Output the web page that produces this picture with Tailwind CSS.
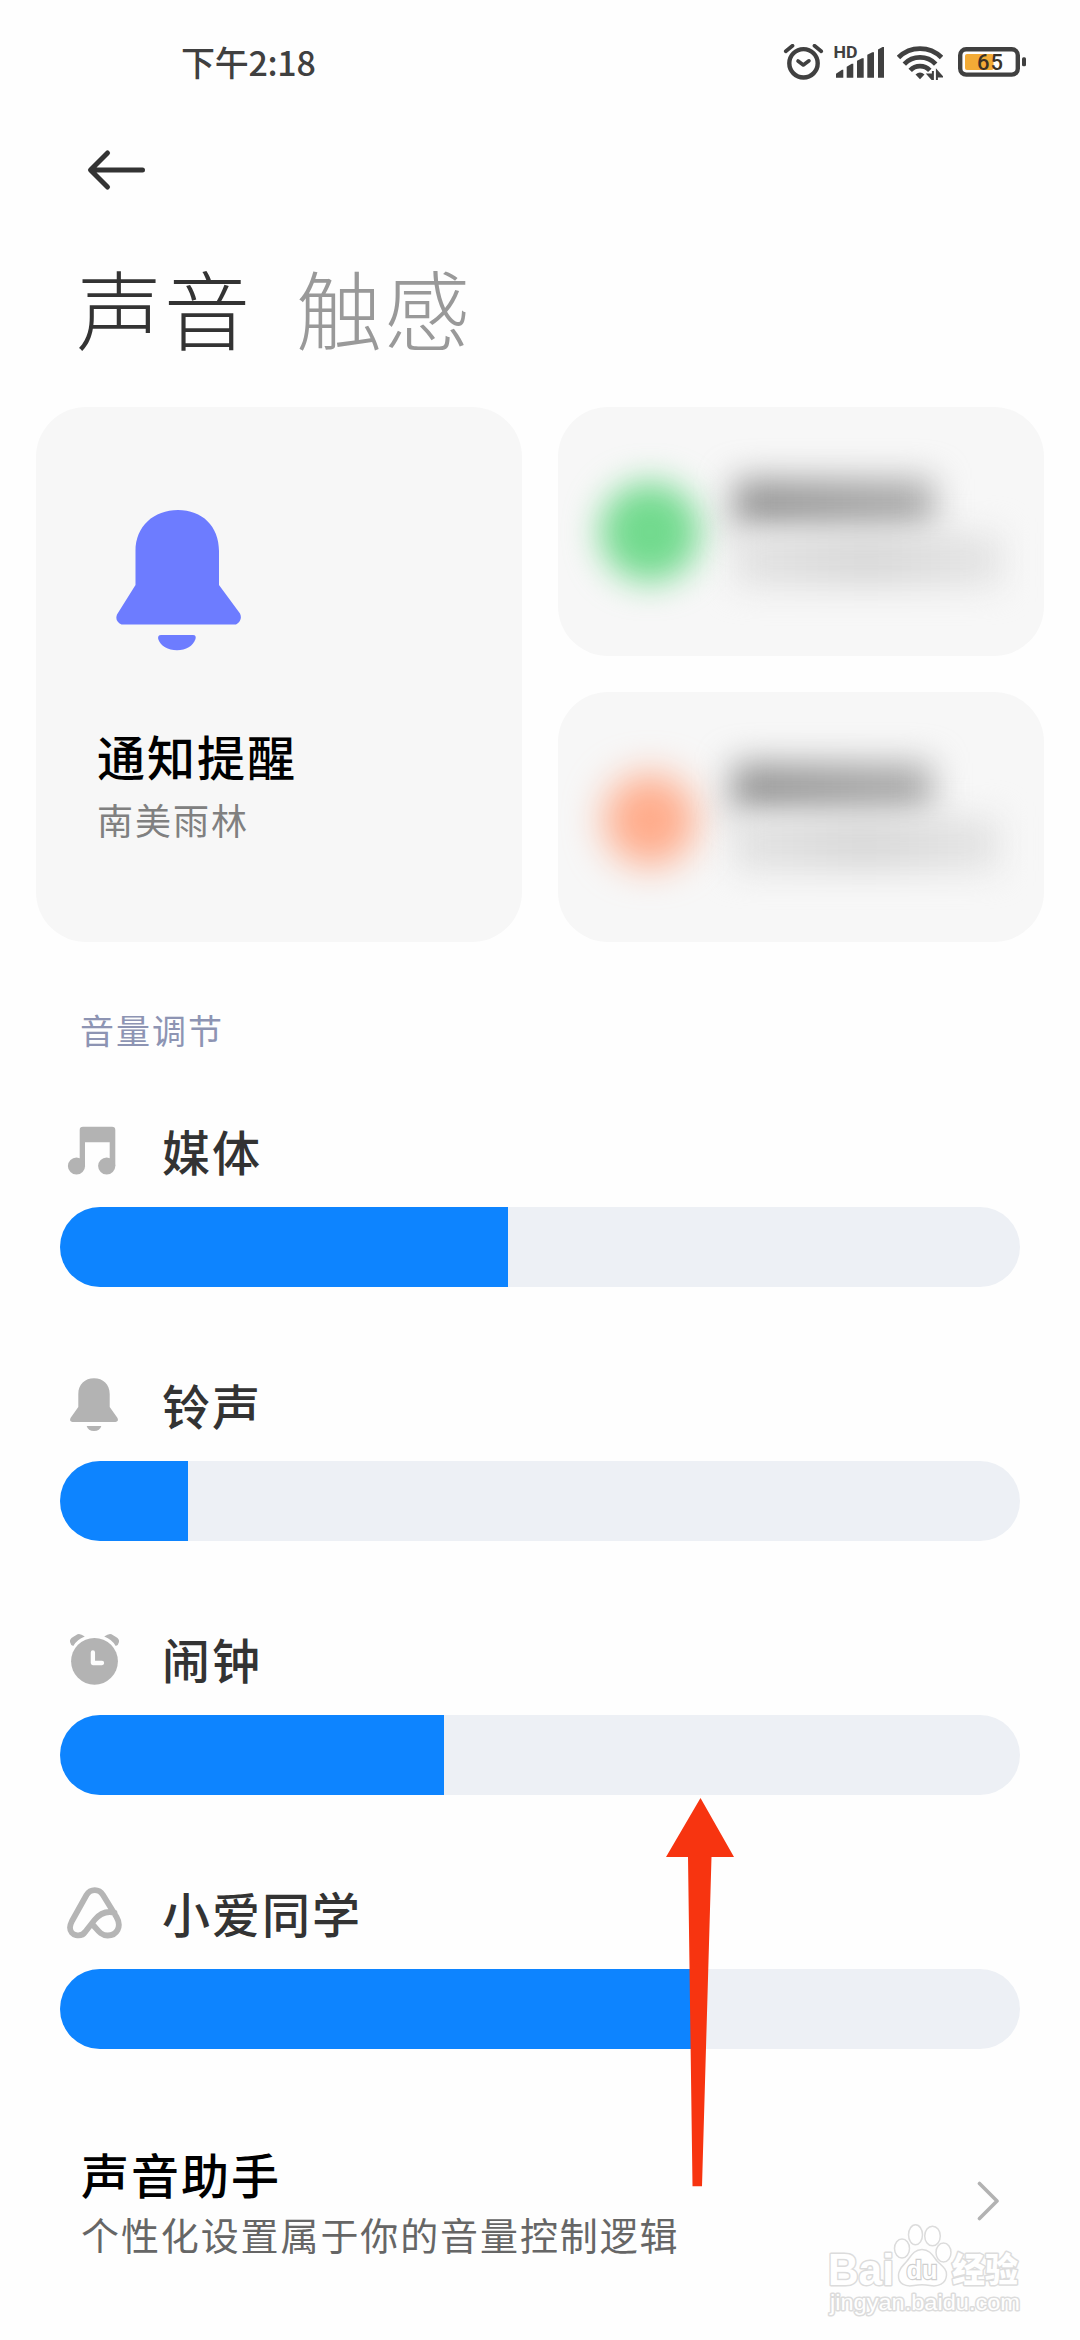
<!DOCTYPE html>
<html lang="zh-CN">
<head>
<meta charset="utf-8">
<title>声音</title>
<script src="https://cdn.jsdelivr.net/npm/@tailwindcss/browser@4"></script>
</head>
<body class="bg-[#fefefe]">
<div class="relative flex h-[2340px] w-[1080px] flex-col overflow-hidden bg-[#fefefe] font-['Noto_Sans_CJK_SC',sans-serif] text-[#333]">

  <!-- status bar -->
  <div class="flex h-[124px] shrink-0 items-center pl-[181px] pr-[54px]">
    <span class="text-[34px] leading-[50px] font-medium tracking-[-0.3px] text-[#404040]">下午2:18</span>
    <svg class="ml-auto" width="41" height="36" viewBox="783 44 41 36" fill="none" stroke="#404040" stroke-linecap="round">
      <circle cx="803.5" cy="63.3" r="14.2" stroke-width="4.4"/>
      <path d="M785.8 51.2 792.5 45.8M814.5 45.8 821.2 51.2" stroke-width="3.8"/>
      <path d="M798 61 803.3 65 809 60.8" stroke-width="3.6" stroke-linejoin="round"/>
    </svg>
    <svg class="ml-[10px]" width="50" height="36" viewBox="834 44 50 36" fill="#404040">
      <text x="833.5" y="58" font-family="Roboto, sans-serif" font-size="17" font-weight="700" textLength="24" lengthAdjust="spacingAndGlyphs">HD</text>
      <path d="M836 77.8v-4l6-4h1.3v8zM846.7 77.8v-11l5-3h1.6v14zM857 77.8V60.8l5-2.5h1.7v19.5zM867.3 77.8V54.8l5-2.5h1.7v25.5zM878 77.8V49.6l4.5-2.5h1.5v30.7z"/>
    </svg>
    <svg class="ml-[13px]" width="46" height="36" viewBox="897 44 46 36" fill="none" stroke="#404040" stroke-width="4.8">
      <path d="M898.5 57.5A30.4 30.4 0 0 1 941.5 57.5M904.3 64.1A21.8 21.8 0 0 1 935.7 64.1M910.2 70.3A13.6 13.6 0 0 1 929.8 70.3"/>
      <path d="M915.5 74.4Q920 70.5 924.5 74.4L920 79.2Z" fill="#404040" stroke="none"/>
      <path d="M932.900 71V80L928 74.500H932.900M936.900 80V71L941.800 76.500H936.900" stroke-width="2" fill="#404040"/>
    </svg>
    <svg class="ml-[15px]" width="68" height="36" viewBox="958 44 68 36">
      <rect x="960.2" y="49.2" width="57.6" height="25.4" rx="6" fill="none" stroke="#404040" stroke-width="4.4"/>
      <rect x="1022" y="57.3" width="4" height="9" rx="1.5" fill="#404040"/>
      <rect x="965" y="54" width="28.5" height="16" rx="2" fill="#f3ab36"/>
      <text x="977" y="70.3" font-family="Roboto, sans-serif" font-size="22" font-weight="500" fill="#3b3226" textLength="26">65</text>
    </svg>
  </div>

  <!-- navigation -->
  <div class="flex h-[92px] shrink-0 items-center pl-[86px]">
    <svg width="60" height="42" viewBox="0 0 60 42" fill="none" stroke="#333" stroke-width="5" stroke-linecap="round" stroke-linejoin="round">
      <path d="M56.5 21H5M21.5 4 4.5 21 21.5 38"/>
    </svg>
  </div>

  <!-- tabs -->
  <div class="flex h-[181px] shrink-0 items-center gap-[44px] pl-[76px] text-[86px] leading-[120px] font-light tracking-[2px]">
    <span>声音</span>
    <span class="text-[#999]">触感</span>
  </div>

  <!-- cards -->
  <div class="mt-[10px] flex shrink-0 gap-9 px-9">
    <div class="flex h-[535px] w-[486px] flex-col rounded-[50px] bg-[#f7f7f7] pl-[61px] pt-[103px]">
      <svg class="ml-[19px] shrink-0" width="125" height="141" viewBox="0 0 125 141" fill="#6d7cff">
        <path d="M19.500 41C19.500 16 38 0 62 0S103 16 103 41V75L124 103.500Q127 110 120 114.500H5.500Q-1.500 111 1 104.500L19.500 75Z"/>
        <path d="M45 125H77Q80.500 125 79.500 129C77 136 70 140.300 61 140.300S44.500 136 42.200 129Q41.500 125 45 125Z"/>
      </svg>
      <span class="mt-[74px] text-[48px] leading-[60px] font-medium tracking-[2px] text-black">通知提醒</span>
      <span class="mt-[14px] text-[36px] leading-[40px] tracking-[2px] text-[#808080]">南美雨林</span>
    </div>
    <div class="flex w-[486px] flex-col gap-9">
      <div class="flex h-[249px] gap-[30px] rounded-[50px] bg-[#f7f7f7] pl-[42px] pt-[72px]">
        <div class="mt-[3px] h-[100px] w-[100px] shrink-0 rounded-full bg-[#72da8e] blur-[17px]"></div>
        <div class="flex flex-col pl-1">
          <div class="h-[50px] w-[200px] bg-linear-to-r from-[#949494] to-[#adadad] blur-[17px]"></div>
          <div class="mt-1 h-[54px] w-[268px] bg-linear-to-r from-[#e4e4e4] via-[#d8d8d8] to-[#e6e6e6] blur-[16px]"></div>
        </div>
      </div>
      <div class="flex h-[250px] gap-[32px] rounded-[50px] bg-[#f7f7f7] pl-[46px] pt-[71px]">
        <div class="mt-[11px] h-[92px] w-[92px] shrink-0 rounded-full bg-[#ffab8a] blur-[19px]"></div>
        <div class="flex flex-col pl-1">
          <div class="h-[50px] w-[200px] bg-linear-to-r from-[#949494] to-[#adadad] blur-[17px]"></div>
          <div class="mt-1 h-[54px] w-[268px] bg-linear-to-r from-[#e4e4e4] via-[#d8d8d8] to-[#e6e6e6] blur-[16px]"></div>
        </div>
      </div>
    </div>
  </div>

  <h2 class="shrink-0 pb-[43px] pl-[80px] pt-[68px] text-[34px] leading-[40px] tracking-[2px] text-[#8d94b3]">音量调节</h2>

  <!-- volume sliders -->
  <div class="h-[254px] shrink-0">
    <div class="flex h-[114px] items-center gap-[39px] pl-[67px]">
      <svg width="56" height="56" viewBox="0 0 56 56" fill="#b3b3b3">
        <path d="M12.700 8Q12.700 4.700 16 4.700H45Q48.300 4.700 48.300 8V44H42.700V20.300H18V44H12.700Z"/>
        <circle cx="9.500" cy="44" r="8.600"/><circle cx="39.700" cy="44" r="8.600"/>
      </svg>
      <span class="text-[48px] leading-[70px] font-medium tracking-[2px]">媒体</span>
    </div>
    <div class="mx-[60px] h-20 overflow-hidden rounded-full bg-[#edf0f5]"><div class="h-full bg-[#0d84ff]" style="width:448px"></div></div>
  </div>
  <div class="h-[254px] shrink-0">
    <div class="flex h-[114px] items-center gap-[39px] pl-[67px]">
      <svg width="56" height="56" viewBox="0 0 56 56" fill="#b3b3b3">
        <path d="M11.300 18C11.300 8.500 18 2.300 27 2.300S42.700 8.500 42.700 18V31L50.500 42Q52 45.500 48.500 46H5.500Q2 45.500 3.500 42L11.300 31Z"/>
        <path d="M19.700 50H34.300Q33 55 27 55T19.700 50Z"/>
      </svg>
      <span class="text-[48px] leading-[70px] font-medium tracking-[2px]">铃声</span>
    </div>
    <div class="mx-[60px] h-20 overflow-hidden rounded-full bg-[#edf0f5]"><div class="h-full bg-[#0d84ff]" style="width:128px"></div></div>
  </div>
  <div class="h-[254px] shrink-0">
    <div class="flex h-[114px] items-center gap-[39px] pl-[67px]">
      <svg width="56" height="56" viewBox="0 0 56 56" fill="#b3b3b3">
        <circle cx="27.500" cy="31.300" r="23.400"/>
        <path d="M3 12Q2.500 9 6 7L10.500 4.300Q13 3 17.800 6.600Q10 9.500 6.300 16Q3.500 15 3 12ZM52 12Q52.500 9 49 7L44.500 4.300Q42 3 37.200 6.600Q45 9.500 48.700 16Q51.500 15 52 12Z"/>
        <path d="M25.900 22.500V33H35" fill="none" stroke="#fefefe" stroke-width="4.300" stroke-linecap="round" stroke-linejoin="round"/>
      </svg>
      <span class="text-[48px] leading-[70px] font-medium tracking-[2px]">闹钟</span>
    </div>
    <div class="mx-[60px] h-20 overflow-hidden rounded-full bg-[#edf0f5]"><div class="h-full bg-[#0d84ff]" style="width:384px"></div></div>
  </div>
  <div class="h-[254px] shrink-0">
    <div class="flex h-[114px] items-center gap-[39px] pl-[67px]">
      <svg width="56" height="56" viewBox="0 0 56 56" fill="none" stroke="#b5b5b5" stroke-width="5.800" stroke-linecap="round" stroke-linejoin="round">
        <path d="M47.500 28.600C39 26.500 32 30.500 27.500 36L18.500 47.500C14 54 3 52 3 43.500C3 41 4 39 5 37L19.500 11C23.500 4.500 32 4.500 36 11L49.500 33C55 42.500 50 51.500 40.500 51.500C34 51.500 31 46.500 26.500 41.500"/>
      </svg>
      <span class="text-[48px] leading-[70px] font-medium tracking-[2px]">小爱同学</span>
    </div>
    <div class="mx-[60px] h-20 overflow-hidden rounded-full bg-[#edf0f5]"><div class="h-full bg-[#0d84ff]" style="width:640px"></div></div>
  </div>

  <!-- sound assistant -->
  <div class="flex shrink-0 items-center justify-between pl-[81px] pr-[80px] pt-[34px]">
    <div class="flex flex-col">
      <span class="text-[48px] leading-[60px] font-medium tracking-[2px] text-black">声音助手</span>
      <span class="mt-[11px] text-[38px] leading-[40px] tracking-[1.9px] text-[#666]">个性化设置属于你的音量控制逻辑</span>
    </div>
    <svg class="mt-[5px]" width="24" height="40" viewBox="0 0 24 40" fill="none" stroke="#b2b2b2" stroke-width="3.600" stroke-linecap="round" stroke-linejoin="round"><path d="M3.500 2.500 21 20 3.500 37.500"/></svg>
  </div>

  <!-- pointer arrow -->
  <svg class="absolute left-[660px] top-[1790px]" width="80" height="400" viewBox="660 1790 80 400" fill="#f73410">
    <path d="M700.500 1798 734 1857H711.500L702 2186.300H692.500L688 1857H666Z"/>
  </svg>

  <!-- watermark -->
  <svg class="absolute left-[820px] top-[2215px]" width="220" height="115" viewBox="820 2215 220 115" fill="#fff" stroke="#dcdcdc" stroke-width="1.500">
    <g stroke-width="3" paint-order="stroke" stroke-linejoin="round">
      <text x="828" y="2284.500" font-family="Liberation Sans, sans-serif" font-weight="700" font-size="44" textLength="66" lengthAdjust="spacingAndGlyphs">Bai</text>
      <text x="952" y="2282" font-family="Noto Sans CJK SC, sans-serif" font-weight="900" font-size="34" textLength="66" lengthAdjust="spacingAndGlyphs">经验</text>
      <text x="830" y="2310" font-family="Liberation Sans, sans-serif" font-size="22" textLength="190" lengthAdjust="spacingAndGlyphs">jingyan.baidu.com</text>
    </g>
    <ellipse cx="902" cy="2248.500" rx="7.500" ry="9.500"/>
    <ellipse cx="915.500" cy="2234.800" rx="7" ry="10"/>
    <ellipse cx="932.500" cy="2236" rx="7.800" ry="9.800"/>
    <ellipse cx="943.500" cy="2252.500" rx="7.500" ry="9.500"/>
    <path d="M922 2249.500C930 2249.500 933 2256 937 2261C942 2266 947 2269 946.500 2275C946 2284 938 2287 930 2285.500C924 2284.500 920 2284.500 914 2285.500C905 2287 898 2284 898.500 2275C899 2268 903 2266 907 2261C911 2256 914 2249.500 922 2249.500Z"/>
    <text x="906.500" y="2279" font-family="Liberation Sans, sans-serif" font-weight="700" font-size="26" stroke-width="2.400" paint-order="stroke" stroke="#cfcfcf" textLength="31" lengthAdjust="spacingAndGlyphs">du</text>
  </svg>
</div>
</body>
</html>
